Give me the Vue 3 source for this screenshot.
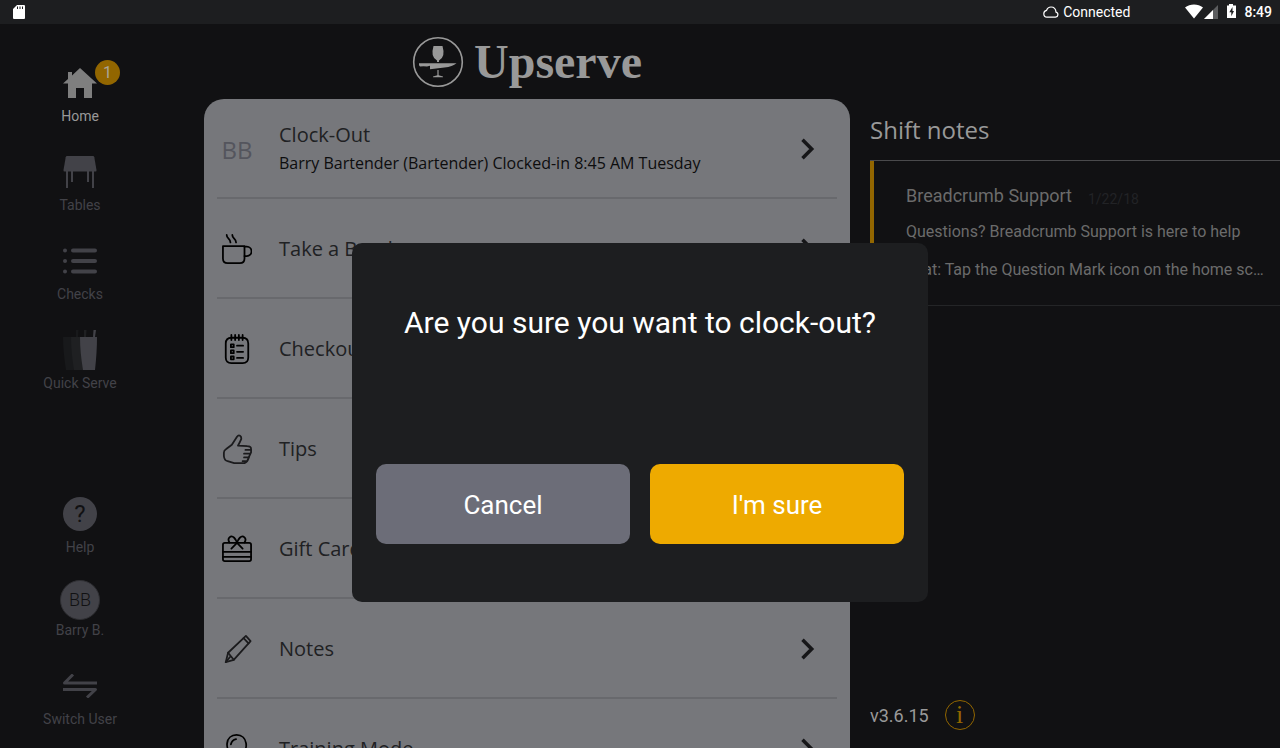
<template>
  <div class="app">
    <header class="status-bar">
      <svg class="sd-card" width="12" height="14" viewBox="0 0 12 14" aria-hidden="true">
        <path fill="#fff" d="M4 0h7a1 1 0 0 1 1 1v12a1 1 0 0 1-1 1H1a1 1 0 0 1-1-1V4z" />
        <path stroke="#1d1e20" stroke-width="1" d="M4.500 1.500v2.500M7 1.500v2.500M9.500 1.500v2.500" />
      </svg>
      <div class="connection">
        <svg width="16" height="12" viewBox="0 0 16 12" fill="none" stroke="#fff" stroke-width="1.2" aria-hidden="true">
          <path d="M4 11.200h8.500a2.600 2.600 0 0 0 .5-5.100C12.800 3 10.800 1 8 1 5.600 1 4.200 2.500 3.600 4.300 1.700 4.700.8 6 .8 7.800.8 9.900 2.200 11.200 4 11.200z" />
        </svg>
        <span>Connected</span>
      </div>
      <div class="indicators">
        <svg width="52" height="16" viewBox="0 0 52 16" aria-hidden="true">
          <path fill="#fff" d="M9 14.500 0 3.500C5-.500 13-.500 18 3.500z" />
          <path fill="#5c5d5f" d="M33 1v14H19z" />
          <path fill="#fff" d="M28 6v9h-9z" />
          <path fill="#fff" d="M44 0h4v1.500h3V14h-9V1.500h2z" />
          <path fill="#1d1e20" d="M47.500 3 44.300 8.300h2v4L49 7h-1.500z" />
        </svg>
        <span class="clock">8:49</span>
      </div>
    </header>

    <div class="layout">
      <nav class="sidebar">
        <div class="nav-group">
          <button class="nav-item active" type="button">
            <span class="nav-icon">
              <svg width="34" height="32" viewBox="0 0 34 32" fill="#7f7f7f">
                <path d="M17 1 34 16.500H29V31H21V21H13V31H5V16.500H0L5 12V5H9V8.400z" />
              </svg>
              <span class="badge">1</span>
            </span>
            <span class="nav-label">Home</span>
          </button>
          <button class="nav-item" type="button">
            <span class="nav-icon">
              <svg width="34" height="32" viewBox="0 0 34 32" fill="#424248">
                <path d="M4 0h26q1 0 1.300 1.200L33.500 14q.2 1.500-1 1.500h-31q-1.200 0-1-1.500L2.700 1.200Q3 0 4 0z" />
                <path d="M3 15h2v17H3zM8 15h2v11H8zM24 15h2v11h-2zM29 15h2v17h-2z" />
              </svg>
            </span>
            <span class="nav-label">Tables</span>
          </button>
          <button class="nav-item" type="button">
            <span class="nav-icon">
              <svg width="34" height="26" viewBox="0 0 34 26" fill="none" stroke="#424248" stroke-width="4" stroke-linecap="round">
                <path d="M2 2.500h.01M10 2.500h22M2 13h.01M10 13h22M2 23.500h.01M10 23.500h22" />
              </svg>
            </span>
            <span class="nav-label">Checks</span>
          </button>
          <button class="nav-item" type="button">
            <span class="nav-icon">
              <svg width="34" height="40" viewBox="0 0 34 40">
                <path fill="#18191b" d="M0 7h17l-2 33H3Q0 22 0 7zM13 0h2.500l-.5 7h-2z" />
                <path fill="#1f2022" d="M8 7h17l-2 33H11Q8 22 8 7zM21 0h2.500l-.5 7h-2z" />
                <path fill="#424248" d="M17 7h17q0 15-2 33H20Q17 22 17 7zM30.500 0H33l-1 7h-2z" />
              </svg>
            </span>
            <span class="nav-label">Quick Serve</span>
          </button>
        </div>

        <div class="nav-group">
          <button class="nav-item" type="button">
            <span class="nav-icon"><span class="help-mark">?</span></span>
            <span class="nav-label">Help</span>
          </button>
          <button class="nav-item user" type="button">
            <span class="nav-icon"><span class="avatar">BB</span></span>
            <span class="nav-label">Barry B.</span>
          </button>
          <button class="nav-item" type="button">
            <span class="nav-icon">
              <svg width="34" height="24" viewBox="0 0 34 24" fill="none" stroke="#424248" stroke-width="3" stroke-linejoin="round">
                <path d="M34 9H1.500L10 .5M0 15.500h32.500L24 23.500" />
              </svg>
            </span>
            <span class="nav-label">Switch User</span>
          </button>
        </div>
      </nav>

      <main class="content">
        <div class="brand">
          <svg width="52" height="52" viewBox="0 0 52 52" fill="#999">
            <circle cx="26" cy="26" r="24.300" fill="none" stroke="#999" stroke-width="1.600" />
            <path d="M21.500 10h9q1.500 5 .8 9-1 4-4.300 5.500V26h-2v-1.500q-3.300-1.500-4.300-5.500-.7-4 .8-9z" />
            <path d="M7 27.200h37.500q-4 3.300-12 4.300l-14.500 1.800v-3.600l-3 .8q-3.500-.3-7 0-1.500-1-1-3.300z" />
            <path d="M25.400 34h1.200v5.300l4.400 1.200v.8H21v-.8l4.400-1.200z" />
          </svg>
          <span class="brand-name">Upserve</span>
        </div>

        <div class="card">
          <button v-for="item in items" :key="item.title" class="row" type="button">
            <span class="row-icon">
              <span v-if="item.initials" class="initials">{{ item.initials }}</span>
              <svg
                v-else
                width="30"
                height="30"
                viewBox="0 0 32 32"
                fill="none"
                :stroke="item.color"
                stroke-width="1.9"
                stroke-linecap="round"
                stroke-linejoin="round"
              >
                <path v-for="d in item.paths" :key="d" :d="d" />
              </svg>
            </span>
            <span class="row-text">
              <span class="row-title">{{ item.title }}</span>
              <span v-if="item.detail" class="row-detail">{{ item.detail }}</span>
            </span>
            <svg class="chevron" width="14" height="22" viewBox="0 0 14 22" fill="none" stroke="#161618" stroke-width="3.5">
              <path d="m1.500 1.800 9.200 9.200-9.200 9.200" />
            </svg>
          </button>
        </div>
      </main>

      <aside class="notes">
        <h2>Shift notes</h2>
        <article class="note">
          <div class="note-head">
            <h3>Breadcrumb Support</h3>
            <time>1/22/18</time>
          </div>
          <p>Questions? Breadcrumb Support is here to help</p>
          <p>chat: Tap the Question Mark icon on the home screen</p>
        </article>
        <div class="version">
          <span>v3.6.15</span>
          <button class="info" type="button" aria-label="About">i</button>
        </div>
      </aside>
    </div>

    <div v-if="dialogOpen" class="overlay">
      <div class="dialog" role="dialog" aria-modal="true" aria-labelledby="dialog-title">
        <h1 id="dialog-title">Are you sure you want to clock-out?</h1>
        <div class="dialog-actions">
          <button type="button" class="cancel" @click="dialogOpen = false">Cancel</button>
          <button type="button" class="confirm" @click="dialogOpen = false">I'm sure</button>
        </div>
      </div>
    </div>
  </div>
</template>

<script setup>
import { ref } from 'vue';

const dialogOpen = ref(true);

const items = [
  {
    title: 'Clock-Out',
    detail: 'Barry Bartender (Bartender) Clocked-in 8:45 AM Tuesday',
    initials: 'BB'
  },
  {
    title: 'Take a Break',
    color: '#000',
    paths: [
      'M1 13H24V26Q24 31 19 31H6Q1 31 1 26z',
      'M24 13.500h2.500a4.500 4.500 0 0 1 0 10H24',
      'M5 1q0 2 2 4t2 4M11 1q0 2 2 4t2 4'
    ]
  },
  {
    title: 'Checkout',
    color: '#000',
    paths: [
      'M10 4H22Q28 4 28 10V25Q28 31 22 31H10Q4 31 4 25V10Q4 4 10 4z',
      'M10 1v5.500M14 1v5.500M18 1v5.500M22 1v5.500',
      'M9.500 11h3v3H9.500zM9.500 17.500h3v3H9.500zM9.500 24h3v3H9.500z',
      'M16 12.500h6.500M16 19h6.500M16 25.500h6.500'
    ]
  },
  {
    title: 'Tips',
    color: '#1b1b1d',
    paths: [
      'M17 12.500Q19 9 20.500 5.500C21 2 18 0 16 3L10.500 11.500 4.500 16Q2 17.500 2 20V23.500Q2.500 28.500 6 29L13 31H24Q27.500 29.500 28.500 25L31 19.500V16Q31 13 27 13z',
      'M25 17h5.500M23.500 21h6.500M23.500 25h5M22 29h3'
    ]
  },
  {
    title: 'Gift Cards',
    color: '#000',
    paths: [
      'M3 9.500H29Q31 9.500 31 11.500V27Q31 29 29 29H3Q1 29 1 27V11.500Q1 9.500 3 9.500z',
      'M1 19h30M1 24.500h30',
      'M8 9C5 4.500 9.500.5 13 4Q15 6 16 9.500 17 6 19 4C22.500.5 27 4.500 24 9',
      'M10 15.500l6-6 6 6'
    ]
  },
  {
    title: 'Notes',
    color: '#1b1b1d',
    paths: [
      'M4 30 6.500 20 25.500 2 30.500 7.500 12.500 27.500z',
      'M6.500 20 12.500 27.500M23 4.500 28.300 10M4 30l4.500-5.500'
    ]
  },
  {
    title: 'Training Mode',
    color: '#000',
    paths: [
      'M12 22C2 17 3.500 1 15.500 1S29 17 20 22v6h-8z',
      'M9.500 11Q10.500 6.500 15 5.500M12 25h8'
    ]
  }
];
</script>

<style>
body {
  margin: 0;
  background: #111113;
}
</style>

<style scoped>
.app {
  position: relative;
  display: flex;
  flex-direction: column;
  height: 100vh;
  overflow: hidden;
  background: #111113;
  font-family: Roboto, sans-serif;
}

button {
  padding: 0;
  border: none;
  background: none;
  color: inherit;
  font-family: inherit;
  cursor: pointer;
}

h1,
h2,
h3,
p {
  margin: 0;
  font-weight: 400;
}

.status-bar {
  display: flex;
  flex: none;
  align-items: center;
  height: 24px;
  padding: 0 8px 0 13px;
  background: #1d1e20;
  color: #fff;
  font-size: 14px;
}

.connection {
  display: flex;
  align-items: center;
  gap: 4px;
  margin-left: auto;
}

.indicators {
  display: flex;
  align-items: center;
  gap: 7px;
  margin-left: 55px;
}

.clock {
  font-weight: 500;
}

.layout {
  display: grid;
  flex: 1;
  grid-template-rows: minmax(0, 1fr);
  grid-template-columns: 160px minmax(0, 690fr) minmax(0, 430fr);
  min-height: 0;
}

/* Sidebar */
.sidebar {
  display: flex;
  flex-direction: column;
  justify-content: space-between;
  padding: 39px 0 21px;
}

.nav-group {
  display: flex;
  flex-direction: column;
  gap: 28px;
}

.nav-item {
  display: flex;
  flex-direction: column;
  align-items: center;
  gap: 5px;
  color: #424248;
}

.nav-item.user {
  gap: 2px;
  margin-top: -3px;
}

.nav-item.active {
  color: #999;
}

.nav-icon {
  position: relative;
  display: flex;
  align-items: center;
  justify-content: center;
  height: 40px;
}

.nav-label {
  font-size: 14px;
  line-height: 16px;
}

.badge {
  position: absolute;
  top: -3px;
  left: 32px;
  width: 25px;
  border-radius: 50%;
  background: #926600;
  color: #aaa59a;
  font-size: 16px;
  line-height: 25px;
}

.help-mark {
  width: 34px;
  border-radius: 50%;
  background: #424248;
  color: #111113;
  font-size: 24px;
  line-height: 34px;
}

.avatar {
  box-sizing: border-box;
  width: 40px;
  border: 1px solid #2f2f33;
  border-radius: 50%;
  background: #424248;
  color: #111113;
  font-size: 18px;
  font-weight: 300;
  line-height: 38px;
}

/* Main menu */
.content {
  padding-left: 44px;
}

.brand {
  display: flex;
  align-items: center;
  justify-content: center;
  gap: 10px;
  height: 75px;
  color: #999;
}

.brand-name {
  font-family: "Liberation Serif", serif;
  font-size: 48px;
  font-weight: 700;
}

.card {
  padding: 0 13px;
  border-radius: 20px 20px 0 0;
  background: #76777b;
}

.row {
  display: flex;
  align-items: center;
  box-sizing: border-box;
  width: 100%;
  height: 100px;
  padding-top: 2px;
  border-bottom: 2px solid #68696d;
  text-align: left;
  font-family: "Open Sans", "Noto Sans", sans-serif;
}

.row-icon {
  display: flex;
  justify-content: center;
  width: 40px;
}

.initials {
  color: #54555d;
  font-size: 24px;
}

.row-text {
  display: flex;
  flex: 1;
  flex-direction: column;
  margin-left: 22px;
}

.row-title {
  color: #202123;
  font-size: 20px;
  line-height: 28px;
}

.row-detail {
  color: #0d0d0e;
  font-size: 16px;
  line-height: 28px;
}

.chevron {
  margin-right: 22px;
}

/* Shift notes */
.notes {
  display: flex;
  flex-direction: column;
  padding-left: 20px;
}

.notes h2 {
  padding: 88px 0 12px;
  border-bottom: 1px solid #4a4a4c;
  color: #999;
  font-family: "Open Sans", "Noto Sans", sans-serif;
  font-size: 24px;
  line-height: 36px;
}

.note {
  padding: 22px 12px 9px 32px;
  border-bottom: 1px solid #242527;
  border-left: 4px solid #926600;
  color: #6b6b6b;
}

.note-head {
  display: flex;
  align-items: flex-end;
  gap: 16px;
  margin-bottom: 11px;
}

.note h3 {
  font-size: 18px;
  line-height: 26px;
}

.note time {
  color: #222326;
  font-size: 14px;
  line-height: 20px;
}

.note p {
  overflow: hidden;
  margin-bottom: 14px;
  font-size: 16px;
  line-height: 24px;
  text-overflow: ellipsis;
  white-space: nowrap;
}

.version {
  display: flex;
  align-items: center;
  gap: 16px;
  margin-top: auto;
  padding-bottom: 18px;
  color: #999;
  font-size: 18px;
}

.info {
  box-sizing: border-box;
  width: 30px;
  height: 30px;
  border: 1px solid #926600;
  border-radius: 50%;
  color: #926600;
  font-family: "Liberation Serif", serif;
  font-size: 26px;
  line-height: 26px;
}

/* Confirmation dialog */
.overlay {
  position: absolute;
  inset: 0;
  display: flex;
  align-items: flex-start;
  justify-content: center;
  padding-top: 243px;
}

.dialog {
  box-sizing: border-box;
  width: 45%;
  padding: 60px 24px 58px;
  border-radius: 10px;
  background: #1d1e20;
  color: #fff;
}

.dialog h1 {
  font-size: 30px;
  line-height: 40px;
  text-align: center;
}

.dialog-actions {
  display: grid;
  grid-template-columns: 1fr 1fr;
  gap: 20px;
  margin-top: 121px;
}

.dialog-actions button {
  height: 80px;
  padding-top: 2px;
  border-radius: 10px;
  font-size: 26px;
}

.cancel {
  background: #6c6d78;
}

.confirm {
  background: #eeaa00;
}
</style>
